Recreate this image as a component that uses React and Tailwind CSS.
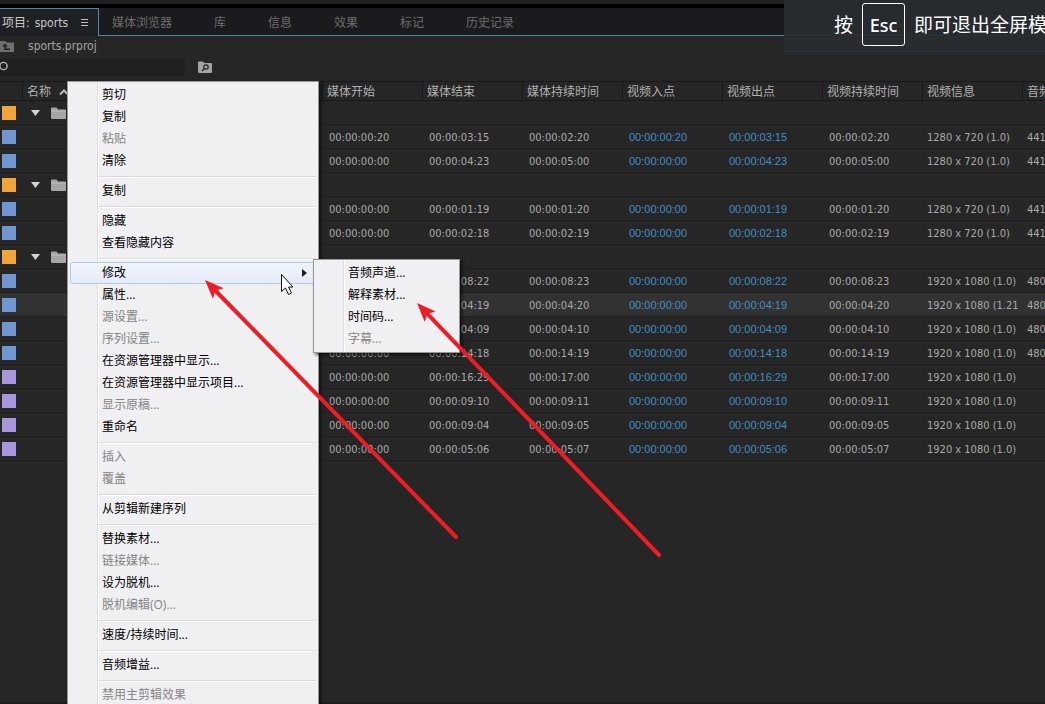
import React from "react";

const TABS = ["媒体浏览器", "库", "信息", "效果", "标记", "历史记录"];

const COLUMNS = [
  "媒体开始",
  "媒体结束",
  "媒体持续时间",
  "视频入点",
  "视频出点",
  "视频持续时间",
  "视频信息",
  "音频信息",
];

const Z = "00:00:00:00";
const HD = "1920 x 1080 (1.0)";
const BIN = { kind: "bin" };
const clip = (kind, start, end, duration, info, audio, selected) => ({
  kind,
  start,
  end,
  duration,
  info,
  audio,
  selected,
});

const ROWS = [
  BIN,
  clip("av", "00:00:00:20", "00:00:03:15", "00:00:02:20", "1280 x 720 (1.0)", "44100 Hz"),
  clip("av", Z, "00:00:04:23", "00:00:05:00", "1280 x 720 (1.0)", "44100 Hz"),
  BIN,
  clip("av", Z, "00:00:01:19", "00:00:01:20", "1280 x 720 (1.0)", "44100 Hz"),
  clip("av", Z, "00:00:02:18", "00:00:02:19", "1280 x 720 (1.0)", "44100 Hz"),
  BIN,
  clip("av", Z, "00:00:08:22", "00:00:08:23", HD, "48000 Hz"),
  clip("av", Z, "00:00:04:19", "00:00:04:20", "1920 x 1080 (1.21", "48000 Hz", true),
  clip("av", Z, "00:00:04:09", "00:00:04:10", HD, "48000 Hz"),
  clip("av", Z, "00:00:14:18", "00:00:14:19", HD, "48000 Hz"),
  clip("video", Z, "00:00:16:29", "00:00:17:00", HD, ""),
  clip("video", Z, "00:00:09:10", "00:00:09:11", HD, ""),
  clip("video", Z, "00:00:09:04", "00:00:09:05", HD, ""),
  clip("video", Z, "00:00:05:06", "00:00:05:07", HD, ""),
];

const SWATCH = {
  bin: "bg-[#f0a53c]",
  av: "bg-[#7097cf]",
  video: "bg-[#a795de]",
};

const MENU = [
  [{ label: "剪切" }, { label: "复制" }, { label: "粘贴", disabled: true }, { label: "清除" }],
  [{ label: "复制" }],
  [{ label: "隐藏" }, { label: "查看隐藏内容" }],
  [
    {
      label: "修改",
      children: [
        { label: "音频声道..." },
        { label: "解释素材..." },
        { label: "时间码..." },
        { label: "字幕...", disabled: true },
      ],
    },
    { label: "属性..." },
    { label: "源设置...", disabled: true },
    { label: "序列设置...", disabled: true },
    { label: "在资源管理器中显示..." },
    { label: "在资源管理器中显示项目..." },
    { label: "显示原稿...", disabled: true },
    { label: "重命名" },
  ],
  [{ label: "插入", disabled: true }, { label: "覆盖", disabled: true }],
  [{ label: "从剪辑新建序列" }],
  [
    { label: "替换素材..." },
    { label: "链接媒体...", disabled: true },
    { label: "设为脱机..." },
    { label: "脱机编辑(O)...", disabled: true },
  ],
  [{ label: "速度/持续时间..." }],
  [{ label: "音频增益..." }],
  [{ label: "禁用主剪辑效果", disabled: true }],
];

function FolderIcon() {
  return (
    <svg width="15" height="12" viewBox="0 0 15 12" aria-hidden="true">
      <path d="M0 1.5Q0 .5 1 .5H5.5L7 2.5H14Q15 2.5 15 3.5V11Q15 12 14 12H1Q0 12 0 11Z" fill="#a6a6a6" />
      <path d="M0 4H15" stroke="#b8b8b8" />
    </svg>
  );
}

function ParentFolderIcon() {
  return (
    <svg width="15" height="12" viewBox="0 0 15 12" aria-hidden="true">
      <path d="M0 1H5L7 2.5H13Q14 2.5 14 3.5V12H0Z" fill="#6f6f6f" />
      <path d="M5 3.5L2 6.5H4.2V10H10V8.5H6V6.5H8Z" fill="#222" />
    </svg>
  );
}

function SearchFolderIcon() {
  return (
    <svg width="15" height="12" viewBox="0 0 15 12" aria-hidden="true">
      <path d="M0 1.5Q0 .5 1 .5H5L6.5 2H13Q14 2 14 3V11Q14 12 13 12H1Q0 12 0 11Z" fill="#a3a3a3" />
      <circle cx="8" cy="6" r="2.2" fill="none" stroke="#262626" strokeWidth="1.2" />
      <path d="M6.5 7.6L4 10" stroke="#262626" strokeWidth="1.4" />
    </svg>
  );
}

function MenuList({ groups, label, className }) {
  return (
    <div
      role="menu"
      aria-label={label}
      className={
        "absolute border border-[#979797] bg-[linear-gradient(to_right,#f0f0f2_29px,#dedee0_29px,#dedee0_30px,#ffffff_30px,#ffffff_31px,#f0eff2_31px)] p-[2px] text-[12px] shadow-[2px_2px_3px_rgba(0,0,0,0.6)] " +
        className
      }
    >
      {groups.map((items, g) => (
        <div key={g} role="group">
          {g > 0 && (
            <div role="separator" className="flex h-2 items-end pb-0.5 pl-7">
              <div className="h-[2px] w-full border-b border-white bg-[#dcdcde]" />
            </div>
          )}
          {items.map((item) => (
            <div key={item.label} className="relative">
              <button
                type="button"
                role="menuitem"
                disabled={item.disabled}
                aria-haspopup={item.children ? "menu" : undefined}
                className={
                  "flex h-[22px] w-full items-center justify-between rounded-[3px] border pl-[31px] pr-2 text-left leading-5 whitespace-nowrap " +
                  (item.children
                    ? "border-[#b4c8e4] bg-[linear-gradient(to_bottom,#f1f3fa,#e4ebf7)] "
                    : "border-transparent ") +
                  (item.disabled ? "text-[#858585]" : "text-black")
                }
              >
                {item.label}
                {item.children && (
                  <svg width="5" height="8" viewBox="0 0 5 8" aria-hidden="true">
                    <path d="M0 0L5 4L0 8Z" fill="#1c1c2c" />
                  </svg>
                )}
              </button>
              {item.children && (
                <MenuList
                  groups={[item.children]}
                  label={item.label}
                  className="left-full -top-[3px] -ml-[3px] w-[147px]"
                />
              )}
            </div>
          ))}
        </div>
      ))}
    </div>
  );
}

function Arrow({ x1, y1, x2, y2 }) {
  const angle = (Math.atan2(y2 - y1, x2 - x1) * 180) / Math.PI;
  const length = Math.hypot(x2 - x1, y2 - y1);
  return (
    <g transform={`translate(${x1} ${y1}) rotate(${angle})`} fill="#ee1c24" stroke="#ee1c24">
      <path d={`M14 0H${length}`} strokeWidth="4" strokeLinecap="round" />
      <path d="M0 0L19 -7.5L15 0L19 7.5Z" stroke="none" />
    </g>
  );
}

function TimeCell({ value, link }) {
  return (
    <td
      className={
        "truncate pl-[7px] " +
        (link
          ? "font-['Liberation_Sans',sans-serif] text-[#4190c4]"
          : "pt-0.5 text-[#a9a9a9]")
      }
    >
      {value}
    </td>
  );
}

export default function App() {
  return (
    <div className="relative flex h-screen flex-col overflow-hidden bg-[#262626] font-['DejaVu_Sans_Condensed','DejaVu_Sans','Noto_Sans_CJK_SC',sans-serif] text-[12px] text-[#a3a3a3]">
      <div className="h-2 shrink-0 border-b-4 border-black bg-[#202020]" />

      <nav className="flex h-7 shrink-0 bg-[#1b1a1c]">
        <button
          type="button"
          className="flex w-[99px] shrink-0 items-center justify-between border-t border-r border-[#4a88ad] bg-[#1f2023] pr-2.5 pl-[2px] text-[#c8c8c8]"
        >
          <span className="flex gap-[5px]">
            <span>项目:</span>
            <span>sports</span>
          </span>
          <svg width="7" height="8" viewBox="0 0 7 8" aria-hidden="true">
            <path d="M0 .5H7M0 3.5H7M0 6.5H7" stroke="#bdbdbd" />
          </svg>
        </button>
        <div className="flex grow items-center gap-[42px] border-b border-[#4a88ad] pt-0.5 pl-[13px] text-[#6d6d6d]">
          {TABS.map((tab) => (
            <button key={tab} type="button" className="whitespace-nowrap">
              {tab}
            </button>
          ))}
        </div>
      </nav>

      <div className="flex h-5 shrink-0 items-center gap-[13px]">
        <ParentFolderIcon />
        <span>sports.prproj</span>
      </div>

      <div className="flex h-[25px] shrink-0 items-start pt-0.5">
        <div className="flex h-[18px] w-[185px] items-center bg-[#202020]">
          <svg width="9" height="12" viewBox="0 0 9 12" aria-hidden="true">
            <circle cx="3.5" cy="5" r="3.6" fill="none" stroke="#b5b5b5" strokeWidth="1.4" />
          </svg>
          <input type="search" aria-label="搜索" className="h-full min-w-0 grow bg-transparent px-1 outline-none" />
        </div>
        <button type="button" aria-label="从查询创建新的搜索素材箱" className="ml-[13px] pt-[3px]">
          <SearchFolderIcon />
        </button>
      </div>

      <div className="grow overflow-hidden border-b-2 border-[#1c1c1c]">
        <table className="w-[1122px] min-w-full table-fixed border-separate border-spacing-0 text-left">
          <colgroup>
            <col className="w-[22px]" />
            <col className="w-[300px]" />
            {COLUMNS.map((c) => (
              <col key={c} className="w-[100px]" />
            ))}
          </colgroup>
          <thead>
            <tr className="h-5 text-[#b0b0b0] [&>th]:border-t [&>th]:border-b [&>th]:border-[#191919] [&>th]:pt-0.5 [&>th]:leading-4 [&>th]:font-normal">
              <th aria-label="标签" />
              <th className="border-l">
                <div className="flex items-center gap-2 pl-1">
                  名称
                  <svg width="10" height="6" viewBox="0 0 10 6" aria-hidden="true">
                    <path d="M1 5.5L5 1.5L9 5.5" fill="none" stroke="#bdbdbd" strokeWidth="2" />
                  </svg>
                </div>
              </th>
              {COLUMNS.map((c) => (
                <th key={c} className="border-l whitespace-nowrap">
                  <span className="pl-1">{c}</span>
                </th>
              ))}
            </tr>
          </thead>
          <tbody className="text-[11px] leading-4">
            {ROWS.map((row, i) => (
              <tr
                key={i}
                className={
                  "h-6 [&>td]:border-b [&>td]:border-[#202020] " +
                  (row.selected ? "bg-[#323233]" : "")
                }
              >
                <td className="pl-[2px]">
                  <div className={"size-[14px] " + SWATCH[row.kind]} />
                </td>
                {row.kind === "bin" ? (
                  <td colSpan={9} className="pl-[9px]">
                    <div className="flex items-center gap-[11px]">
                      <svg width="9" height="6" viewBox="0 0 9 6" aria-hidden="true">
                        <path d="M0 0H9L4.5 6Z" fill="#d2d2d2" />
                      </svg>
                      <FolderIcon />
                    </div>
                  </td>
                ) : (
                  <>
                    <td />
                    <TimeCell value={row.start} />
                    <TimeCell value={row.end} />
                    <TimeCell value={row.duration} />
                    <TimeCell value={row.start} link />
                    <TimeCell value={row.end} link />
                    <TimeCell value={row.duration} />
                    <td className="pt-0.5 pl-[5px] whitespace-nowrap text-[#a9a9a9]">{row.info}</td>
                    <td className="pt-0.5 pl-[5px] whitespace-nowrap text-[#a9a9a9]">{row.audio}</td>
                  </>
                )}
              </tr>
            ))}
          </tbody>
        </table>
      </div>

      <MenuList
        groups={MENU}
        label="剪辑"
        className="top-[81px] left-[67px] w-[252px] font-['Open_Sans','Noto_Sans_CJK_SC',sans-serif]"
      />

      <svg className="pointer-events-none absolute top-0 left-0" width="700" height="600" viewBox="0 0 700 600" aria-hidden="true">
        <path
          d="M281.5 274.5V291.5L285.5 288L288.5 294.5L291.5 293L288.5 287H293Z"
          fill="#fff"
          stroke="#111"
        />
        <Arrow x1={205} y1={280} x2={456} y2={537} />
        <Arrow x1={417} y1={303} x2={659} y2={555} />
      </svg>

      <div className="absolute top-0 right-0 flex h-[55px] w-[261px] items-center gap-[9px] overflow-hidden bg-[#282c31]/95 pb-[6px] pl-[50px] font-['Open_Sans','Noto_Sans_CJK_SC',sans-serif] text-[19px] whitespace-nowrap text-white">
        <span className="pt-0.5">按</span>
        <kbd className="flex h-[43px] w-[43px] shrink-0 items-center justify-center rounded-[3px] border border-white pt-0.5 font-['Noto_Sans',sans-serif] text-[18px] font-medium">
          Esc
        </kbd>
        <span className="pt-0.5">即可退出全屏模式</span>
      </div>
    </div>
  );
}
